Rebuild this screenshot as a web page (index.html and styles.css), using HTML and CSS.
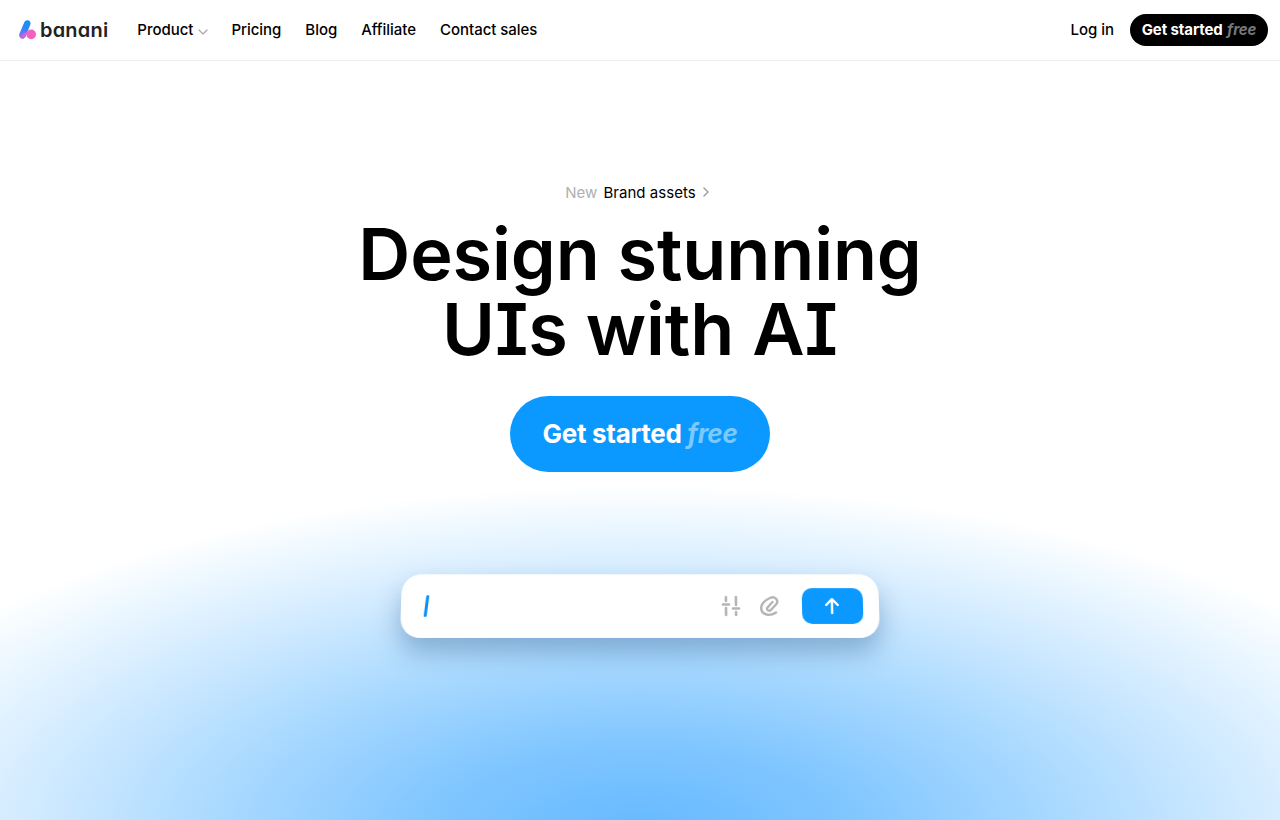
FILE: index.html
```html
<!DOCTYPE html>
<html lang="en">
<head>
  <meta charset="UTF-8" />
  <title>Banani - Design stunning UIs with AI</title>
  <link rel="stylesheet" href="styles.css">
</head>
<body>
  <header class="nav">
    <div class="nav-left">
      <a class="logo" href="#">
        <svg class="logo-mark" width="18" height="20" viewBox="0 0 18 20">
          <defs>
            <linearGradient id="logo-blue" x1="0.2" y1="1" x2="0.6" y2="0">
              <stop offset="0" stop-color="#8a6cf0" />
              <stop offset="0.6" stop-color="#2f86f5" />
              <stop offset="1" stop-color="#1590f5" />
            </linearGradient>
          </defs>
          <path d="M2.4 18.4C.3 17.6 -.3 15.4.5 13.4L5.2 2.4C6.1.5 8.2 -.3 9.8.5 11.6 1.3 12 3.2 11.2 5L6.8 16C5.9 18.1 4.3 19 2.4 18.4Z" fill="url(#logo-blue)" />
          <circle cx="12.2" cy="14.4" r="4.8" fill="#f45fc0" />
          <path d="M4.6 18.4C3.4 18.8 1.8 18.4 .9 17.4 2 15 4.6 12.4 8 11.8L6.8 16C6.4 17.2 5.5 18.1 4.6 18.4Z" fill="#c264e4" />
        </svg>
        <span class="logo-text">banani</span>
      </a>
      <nav class="nav-links">
        <a href="#" class="nav-link">Product
          <svg class="chevron" width="10" height="6" viewBox="0 0 10 6"><path d="M1 1l4 4 4-4" fill="none" stroke="#a8a8a8" stroke-width="1.2" stroke-linecap="round" stroke-linejoin="round" /></svg>
        </a>
        <a href="#" class="nav-link">Pricing</a>
        <a href="#" class="nav-link">Blog</a>
        <a href="#" class="nav-link">Affiliate</a>
        <a href="#" class="nav-link">Contact sales</a>
      </nav>
    </div>
    <div class="nav-right">
      <a href="#" class="nav-link">Log in</a>
      <a href="#" class="btn-small">Get started <em>free</em></a>
    </div>
  </header>

  <main class="hero">
    <a href="#" class="announce">
      <span class="announce-new">New</span>
      <span>Brand assets</span>
      <svg width="6" height="10" viewBox="0 0 6 10"><path d="M1 1l4 4-4 4" fill="none" stroke="#a0a0a0" stroke-width="1.5" stroke-linecap="round" stroke-linejoin="round" /></svg>
    </a>
    <h1>Design stunning<br>UIs with AI</h1>
    <a href="#" class="btn-big">Get started <em>free</em></a>

    <div class="prompt">
      <span class="caret"></span>
      <div class="prompt-tools">
        <svg width="20" height="22" viewBox="0 0 20 22" fill="none" stroke="#b4b4b4" stroke-width="2.6" stroke-linecap="round">
          <path d="M5 2v4M5 13v7M2 9.5h6M15 2v8M15 17v3M12 13.5h6" />
        </svg>
        <svg width="22" height="22" viewBox="0 0 22 22" fill="none" stroke="#b4b4b4" stroke-width="2.4" stroke-linecap="round" stroke-linejoin="round">
          <path d="M13.5 7L8.5 12.500C6.800 14.800 9.800 16.800 12 14.800L17 9.500C20.500 5.500 16 .5 11 3C5 5.500 1.500 10 2.200 14C3 19.500 10 22 17 17.500" />
        </svg>
        <button class="send" type="button" aria-label="Send">
          <svg width="18" height="18" viewBox="0 0 18 18" fill="none" stroke="#fff" stroke-width="2.4" stroke-linecap="round" stroke-linejoin="round">
            <path d="M9 16V2.500M3.200 8L9 2.200 14.800 8" />
          </svg>
        </button>
      </div>
    </div>
  </main>
</body>
</html>
```

FILE: styles.css
```css
* {
  box-sizing: border-box;
}

html,
body {
  height: 100%;
}

body {
  margin: 0;
  overflow: hidden;
  font-family: 'Inter', sans-serif;
  font-feature-settings: 'cv08';
  color: #000;
  background-color: #fff;
  background-image: radial-gradient(ellipse 840px 345px at 640px 830px, #66b9ff 0%, #80c6ff 25%, #a9d9ff 50%, #d0eaff 72%, #eef8ff 90%, #ffffff 100%);
}

a {
  color: inherit;
  text-decoration: none;
}

.nav {
  height: 61px;
  display: flex;
  justify-content: space-between;
  align-items: center;
  padding: 0 12px 0 19px;
  background-color: #fff;
  border-bottom: 1px solid #ececec;
}

.nav-left,
.nav-right,
.nav-links,
.logo {
  display: flex;
  align-items: center;
}

.logo {
  gap: 3px;
  margin-right: 29px;
}

.logo-text {
  font-size: 20px;
  font-weight: 600;
  font-feature-settings: 'cv11';
  color: #222;
  line-height: 1;
  letter-spacing: 0.2px;
}

.nav-links {
  gap: 24px;
  padding-bottom: 2px;
}

.nav-link {
  font-size: 15px;
  font-weight: 500;
  letter-spacing: -0.03px;
  color: #000;
}

.chevron {
  margin-left: 1px;
  margin-right: -1px;
}

.nav-right {
  gap: 16px;
}

.nav-right .nav-link {
  padding-bottom: 2px;
}

.btn-small {
  width: 138px;
  height: 32px;
  padding-bottom: 2px;
  border-radius: 16px;
  background-color: #000;
  color: #fff;
  font-size: 15px;
  font-weight: 700;
  letter-spacing: -0.1px;
  display: flex;
  align-items: center;
  justify-content: center;
  gap: 1px;
  white-space: pre;
}

.btn-small em {
  color: #777;
}

.hero {
  display: flex;
  flex-direction: column;
  align-items: center;
  padding-top: 122px;
}

.announce {
  display: flex;
  align-items: center;
  gap: 6px;
  font-size: 15px;
  letter-spacing: 0.05px;
  height: 18px;
  color: #000;
  transform: translateX(-3px);
}

.announce svg {
  margin-left: 1px;
}

.announce-new {
  color: #b0b0b0;
}

h1 {
  margin: 15px 0 0;
  font-size: 72px;
  font-weight: 600;
  line-height: 75px;
  letter-spacing: -0.12px;
  text-align: center;
}

.btn-big {
  margin-top: 30px;
  width: 260px;
  height: 76px;
  padding-bottom: 2px;
  border-radius: 38px;
  background-color: #0b99ff;
  color: #fff;
  font-size: 26px;
  font-weight: 700;
  letter-spacing: -0.3px;
  display: flex;
  align-items: center;
  justify-content: center;
  white-space: pre;
}

.btn-big em {
  color: #7cc9ff;
}

.prompt {
  margin-top: 102px;
  width: 478px;
  height: 64px;
  border-radius: 20px;
  background-color: #fff;
  box-shadow: 0 14px 26px rgba(30, 80, 130, 0.36);
  display: flex;
  align-items: center;
  justify-content: space-between;
  padding: 0 16px 0 24px;
  transform: perspective(800px) rotateX(6deg);
}

.caret {
  width: 3px;
  height: 22px;
  border-radius: 2px;
  background-color: #0b90f5;
  transform: skewX(-6deg);
}

.prompt-tools {
  display: flex;
  align-items: center;
  gap: 18px;
}

.send {
  width: 61px;
  height: 36px;
  margin-left: 3px;
  border: none;
  border-radius: 10px;
  background-color: #0b99ff;
  display: flex;
  align-items: center;
  justify-content: center;
  padding: 0 2px 0 0;
  cursor: pointer;
}
```
